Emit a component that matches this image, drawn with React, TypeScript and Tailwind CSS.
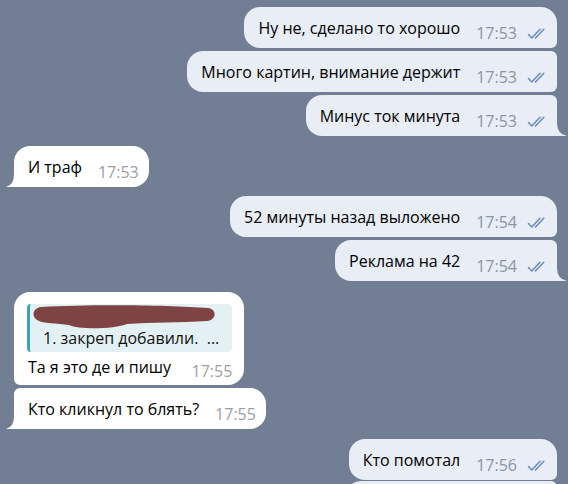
import React from "react";

type Corner = "big" | "small" | "tail";

interface Msg {
  text: string;
  time: string;
  out: boolean;
  top: Corner;
  bottom: Corner;
  mt: string;
}

function Checks() {
  return (
    <svg width="22" height="11" viewBox="0 0 22 11" className="relative top-[5px] ml-[10px] shrink-0" fill="none" stroke="#6c8db5" strokeWidth="1.5" strokeLinecap="round" strokeLinejoin="round">
      <path d="M1.5 6.5 L4.8 10 L13 1.2" />
      <path d="M8.5 10 L16.8 1.2" />
    </svg>
  );
}

function OutTail() {
  return (
    <svg width="11" height="13" viewBox="0 0 11 13" className="absolute bottom-0 right-[-10px]">
      <path d="M0 0 L1 0 Q1 11 11 13 L0 13 Z" fill="#e8edf6" />
    </svg>
  );
}

function InTail() {
  return (
    <svg width="9" height="13" viewBox="0 0 9 13" className="absolute bottom-0 left-[-8px]">
      <path d="M9 0 L8 0 Q8 11 0 13 L9 13 Z" fill="#ffffff" />
    </svg>
  );
}

function radius(out: boolean, top: Corner, bottom: Corner) {
  // side towards the tail gets smaller corners inside a group
  const cls: string[] = [];
  if (out) {
    cls.push("rounded-tl-[16px] rounded-bl-[16px]");
    cls.push(top === "big" ? "rounded-tr-[16px]" : "rounded-tr-[6px]");
    cls.push(bottom === "big" ? "rounded-br-[16px]" : bottom === "small" ? "rounded-br-[6px]" : "rounded-br-none");
  } else {
    cls.push("rounded-tr-[16px] rounded-br-[16px]");
    cls.push(top === "big" ? "rounded-tl-[16px]" : "rounded-tl-[6px]");
    cls.push(bottom === "big" ? "rounded-bl-[16px]" : bottom === "small" ? "rounded-bl-[6px]" : "rounded-bl-none");
  }
  return cls.join(" ");
}

function Bubble({ m }: { m: Msg }) {
  return (
    <div className={`flex ${m.out ? "justify-end pr-[11px]" : "justify-start pl-[14px]"} ${m.mt}`}>
      <div
        className={`relative flex items-baseline pt-[11px] pb-[10px] pl-[14px] ${m.out ? "pr-[8px] bg-[#e8edf6]" : "pr-[10px] bg-white"} ${radius(m.out, m.top, m.bottom)}`}
      >
        <span className="text-[16px] leading-[20px] text-black whitespace-nowrap">{m.text}</span>
        <span className={`relative top-[5px] ml-[16px] text-[16px] leading-[20px] ${m.out ? "text-[#8b95a3]" : "text-[#9c9fa4]"}`}>
          {m.time}
        </span>
        {m.out && <Checks />}
        {m.bottom === "tail" && (m.out ? <OutTail /> : <InTail />)}
      </div>
    </div>
  );
}

function ReplyBubble() {
  return (
    <div className="flex justify-start pl-[14px] mt-[11px]">
      <div className="relative flex flex-col bg-white pt-[12px] pb-[8px] pl-[13px] pr-[12px] rounded-tl-[16px] rounded-tr-[16px] rounded-br-[16px] rounded-bl-[6px]">
        <div className="relative bg-[#e4f1f4] border-l-[3px] border-[#3ea2b6] rounded-[4px] pl-[13px] pr-[13px] pt-[4px] pb-[4px]">
          <svg width="186" height="25" viewBox="0 0 186 25" className="absolute left-[1px] top-[1px]">
            <path
              d="M10 2 C60 -1 140 0 177 3 C186 4 186 15 176 16 C150 18 120 17 96 19 C84 24 48 25 38 20 C26 18 12 19 6 15 C0 11 2 3 10 2 Z"
              fill="#7e4343"
            />
          </svg>
          <div className="h-[20px]" />
          <div className="text-[16px] leading-[20px] text-[#111] whitespace-nowrap">1. закреп добавили.&nbsp;&nbsp;...</div>
        </div>
        <div className="flex items-baseline mt-[5px] pl-[1px]">
          <span className="text-[16px] leading-[20px] text-black whitespace-nowrap">Та я это де и пишу</span>
          <span className="relative top-[4px] ml-auto pl-[20px] text-[16px] leading-[20px] text-[#9c9fa4]">17:55</span>
        </div>
      </div>
    </div>
  );
}

const top3: Msg[] = [
  { text: "Ну не, сделано то хорошо", time: "17:53", out: true, top: "big", bottom: "small", mt: "mt-0" },
  { text: "Много картин, внимание держит", time: "17:53", out: true, top: "small", bottom: "small", mt: "mt-[3px]" },
  { text: "Минус ток минута", time: "17:53", out: true, top: "small", bottom: "tail", mt: "mt-[3px]" },
  { text: "И траф", time: "17:53", out: false, top: "big", bottom: "tail", mt: "mt-[10px]" },
  { text: "52 минуты назад выложено", time: "17:54", out: true, top: "big", bottom: "small", mt: "mt-[9px]" },
  { text: "Реклама на 42", time: "17:54", out: true, top: "small", bottom: "tail", mt: "mt-[3px]" },
];

const after: Msg[] = [
  { text: "Кто кликнул то блять?", time: "17:55", out: false, top: "small", bottom: "tail", mt: "mt-[3px]" },
  { text: "Кто помотал", time: "17:56", out: true, top: "big", bottom: "small", mt: "mt-[10px]" },
];

export default function App() {
  return (
    <div className="w-[568px] h-[484px] overflow-hidden bg-[#727e93] pt-[7px] font-['Open_Sans',sans-serif]">
      {top3.map((m, i) => (
        <Bubble key={i} m={m} />
      ))}
      <ReplyBubble />
      {after.map((m, i) => (
        <Bubble key={"a" + i} m={m} />
      ))}
      <div className="flex justify-end pr-[11px] mt-[1px]">
        <div className="w-[212px] h-[30px] bg-[#e8edf6] rounded-tl-[16px] rounded-tr-[6px]" />
      </div>
    </div>
  );
}
